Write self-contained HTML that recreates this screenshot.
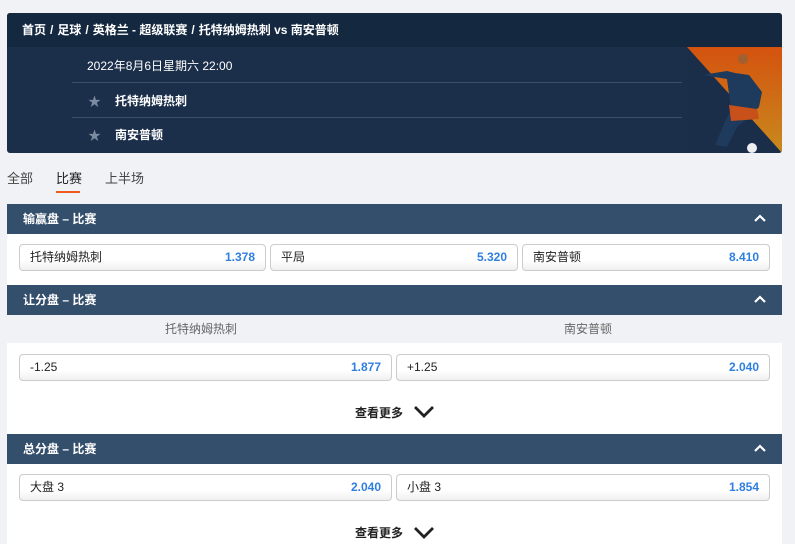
<!DOCTYPE html><html><head><meta charset="utf-8"><style>
*{margin:0;padding:0;box-sizing:border-box}
body{width:795px;height:544px;overflow:hidden;background:#f0f2f5;font-family:"Liberation Sans","Noto Sans CJK SC",sans-serif;font-size:12px;position:relative}
.a{position:absolute}
.card{left:7px;top:13px;width:775px;height:140px;background:#1b2e4a;border-radius:3px;overflow:hidden}
.bc{left:0;top:0;width:775px;height:34px;background:#142840;color:#fff;font-weight:bold;font-size:12px;line-height:34px;padding-left:15px}
.bc i{font-style:normal;margin:0 4px}
.ln{left:65px;width:610px;height:1px;background:#3b506c}
.wt{color:#fff;font-weight:bold}
.star{color:#7d8ba0;font-size:13px}
.tab{top:168px;font-size:13px;color:#444}
.sh{left:7px;width:775px;height:30px;background:#344f6c;color:#fff;font-weight:bold;line-height:30px;padding-left:16px;font-size:12px}
.sh svg{position:absolute;right:16px;top:10px}
.wh{left:7px;width:775px;background:#fff}
.btn{height:27px;border:1px solid #ccc;border-radius:4px;background:linear-gradient(#fff 60%,#f0f0f0);line-height:25px;padding:0 10px;color:#222;font-size:12px}
.btn b{float:right;color:#2f7fe0}
.more{font-weight:bold;font-size:12px;color:#222}
</style></head><body>
<div class="a card">
<div class="a bc">首页<i>/</i>足球<i>/</i>英格兰 - 超级联赛<i>/</i>托特纳姆热刺 vs 南安普顿</div>
<div class="a wt" style="left:80px;top:44px;font-weight:normal">2022年8月6日星期六 22:00</div>
<div class="a ln" style="top:69px"></div>
<div class="a ln" style="top:104px"></div>
<div class="a star" style="left:81px;top:78px">★</div>
<div class="a wt" style="left:108px;top:79px">托特纳姆热刺</div>
<div class="a star" style="left:81px;top:112px">★</div>
<div class="a wt" style="left:108px;top:113px">南安普顿</div>
<svg class="a" style="left:680px;top:34px" width="95" height="106"><defs><linearGradient id="g" x1="0" y1="0" x2="0" y2="1"><stop offset="0" stop-color="#d4520f"/><stop offset="1" stop-color="#c88a1e"/></linearGradient></defs><polygon points="0,0 95,0 95,106" fill="url(#g)"/><polygon points="0,0 95,106 0,106" fill="#1b2e4a" opacity="0.6"/><path d="M15,28 L40,24 L48,26 L62,28 L75,45 L72,60 L60,72 L50,80 L40,100 L28,98 L38,75 L44,62 L40,32 Z" fill="#1e3a5c"/><path d="M42,58 L70,62 L72,72 L44,74Z" fill="#c8501a"/><circle cx="56" cy="12" r="5" fill="#a06030"/><circle cx="65" cy="101" r="5" fill="#eee"/></svg>
</div>
<div class="a tab" style="left:7px">全部</div>
<div class="a tab" style="left:56px;color:#222">比赛</div>
<div class="a" style="left:56px;top:191px;width:24px;height:2px;background:#f05a1e"></div>
<div class="a tab" style="left:105px">上半场</div>

<div class="a sh" style="top:204px">输赢盘 – 比赛<svg width="12" height="8"><path d="M1,7 L6,2 L11,7" stroke="#fff" stroke-width="2.2" fill="none"/></svg></div>
<div class="a wh" style="top:234px;height:51px"></div>
<div class="a btn" style="left:19px;top:244px;width:247px">托特纳姆热刺<b>1.378</b></div>
<div class="a btn" style="left:270px;top:244px;width:248px">平局<b>5.320</b></div>
<div class="a btn" style="left:522px;top:244px;width:248px">南安普顿<b>8.410</b></div>

<div class="a sh" style="top:285px">让分盘 – 比赛<svg width="12" height="8"><path d="M1,7 L6,2 L11,7" stroke="#fff" stroke-width="2.2" fill="none"/></svg></div>
<div class="a" style="left:165px;top:320px;color:#666">托特纳姆热刺</div>
<div class="a" style="left:564px;top:320px;color:#666">南安普顿</div>
<div class="a wh" style="top:343px;height:91px"></div>
<div class="a btn" style="left:19px;top:354px;width:373px">-1.25<b>1.877</b></div>
<div class="a btn" style="left:396px;top:354px;width:374px">+1.25<b>2.040</b></div>
<div class="a more" style="left:355px;top:404px">查看更多</div>
<svg class="a" style="left:413px;top:405px" width="22" height="13"><path d="M2,2 L11,11 L20,2" stroke="#222" stroke-width="2.8" fill="none"/></svg>

<div class="a sh" style="top:434px">总分盘 – 比赛<svg width="12" height="8"><path d="M1,7 L6,2 L11,7" stroke="#fff" stroke-width="2.2" fill="none"/></svg></div>
<div class="a wh" style="top:464px;height:80px"></div>
<div class="a btn" style="left:19px;top:474px;width:373px">大盘 3<b>2.040</b></div>
<div class="a btn" style="left:396px;top:474px;width:374px">小盘 3<b>1.854</b></div>
<div class="a more" style="left:355px;top:524px">查看更多</div>
<svg class="a" style="left:413px;top:526px" width="22" height="13"><path d="M2,2 L11,11 L20,2" stroke="#222" stroke-width="2.8" fill="none"/></svg>
</body></html>
